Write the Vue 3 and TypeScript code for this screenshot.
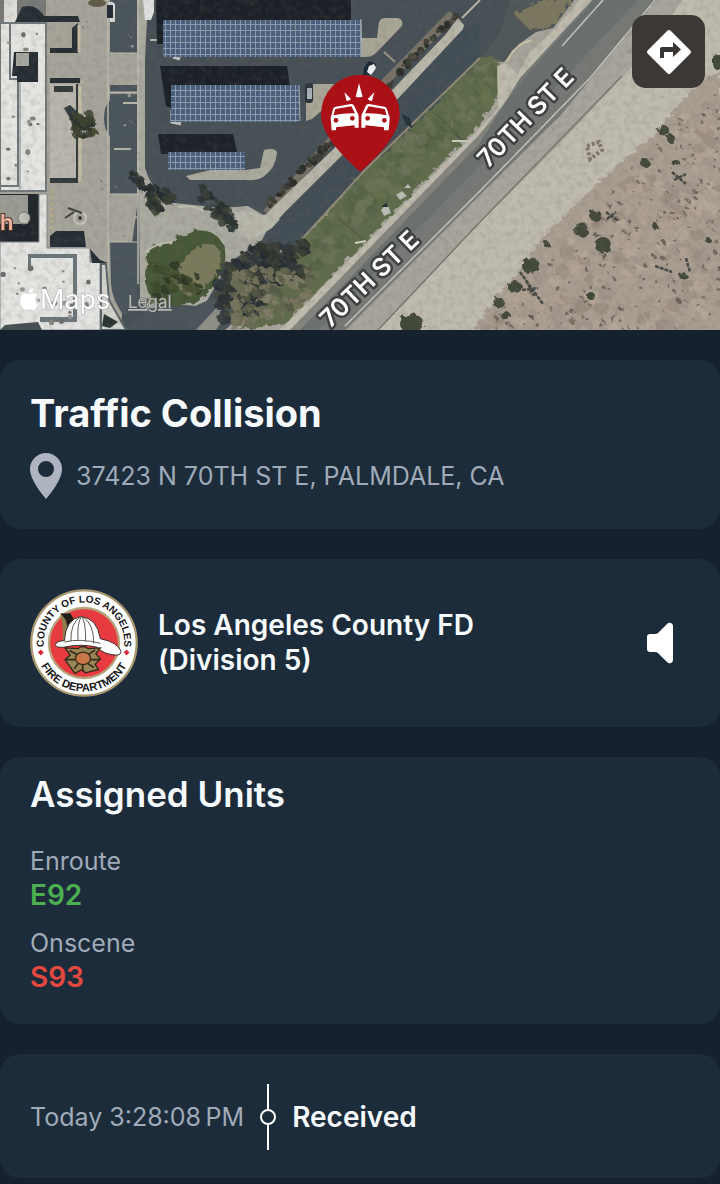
<script setup lang="ts">
interface Unit {
  status: string
  name: string
  tone: 'enroute' | 'onscene'
}

interface Spot {
  x: number
  y: number
  rx: number
  ry: number
  fill: string
}

const units: Unit[] = [
  { status: 'Enroute', name: 'E92', tone: 'enroute' },
  { status: 'Onscene', name: 'S93', tone: 'onscene' },
]

let seed = 4217
function random(): number {
  seed = (seed * 16807) % 2147483647
  return seed / 2147483647
}

function scatter(
  count: number,
  box: [number, number, number, number],
  radius: [number, number],
  fills: string[],
  inside: (x: number, y: number) => boolean = () => true,
): Spot[] {
  const spots: Spot[] = []
  while (spots.length < count) {
    const x = box[0] + random() * (box[2] - box[0])
    const y = box[1] + random() * (box[3] - box[1])
    if (!inside(x, y)) continue
    const r = radius[0] + random() * (radius[1] - radius[0])
    spots.push({ x, y, rx: r, ry: r * (0.6 + random() * 0.5), fill: fills[Math.floor(random() * fills.length)] })
  }
  return spots
}

const inDesert = (x: number, y: number) => y > 326 - (x - 484) * 1.06

const scrub: Spot[] = [
  ...scatter(220, [486, 82, 720, 330], [3, 9], ['#b9ab9b', '#9a8b7e', '#b2a393', '#a0948a'], inDesert),
  ...scatter(200, [486, 82, 720, 330], [0.7, 2.4], ['#574f49', '#64594f', '#4a4742'], inDesert),
]

const bushes: Spot[] = [
  [664, 131, 6, 5], [671, 139, 4, 4], [645, 163, 5, 4], [675, 162, 4, 3], [596, 216, 6, 6],
  [581, 230, 7, 7], [603, 245, 8, 8], [547, 245, 3, 3], [531, 266, 9, 8], [515, 287, 7, 6],
  [499, 303, 6, 5], [505, 315, 5, 4], [591, 296, 4, 4], [718, 62, 6, 8], [412, 324, 12, 10],
  [655, 226, 3, 3], [708, 240, 3, 2], [683, 276, 4, 3],
].map(([x, y, rx, ry]) => ({ x, y, rx, ry, fill: '#434a3a' }))

const trees: Spot[] = [
  ...scatter(90, [218, 236, 264, 318], [2, 7], ['#2b3236', '#353a33', '#434739', '#262d31'], (x, y) => y < 324 - (x - 214) * 0.1 && y > 272 - (x - 216) * 0.7),
  ...scatter(90, [246, 244, 304, 290], [2, 7], ['#242c31', '#30363a', '#2b332f', '#3b4035'], (x, y) => y < 290 - (x - 246) * 0.2),
  ...scatter(130, [234, 268, 312, 328], [2, 6], ['#75745b', '#666a50', '#85806a', '#525744', '#7d7860'], (x, y) => y < 340 - (x - 232) * 0.5),
  ...scatter(40, [148, 188, 172, 212], [2, 5], ['#2c342f', '#384033', '#252c30'], (x, y) => Math.hypot(x - 160, y - 200) < 12),
  ...scatter(50, [202, 186, 236, 230], [2, 5], ['#2e3633', '#3a4036', '#252c30'], (x, y) => Math.abs(y - 196 - (x - 204)) < 9),
  ...scatter(40, [150, 262, 200, 302], [2, 6], ['#3d4a2c', '#2d3625', '#59603e', '#46502f']),
  ...scatter(20, [130, 170, 150, 190], [2, 4], ['#272e31', '#30372f'], (x, y) => Math.abs(y - 172 - (x - 130)) < 5),
  ...scatter(36, [74, 112, 94, 138], [2, 5], ['#39402f', '#2a312a', '#45492f'], (x, y) => Math.hypot(x - 84, y - 125) < 12),
]

const grassTufts = scatter(
  260, [296, 62, 500, 296], [2, 7], ['#4f6040', '#68734f', '#586648', '#767860'],
  (x, y) => y > 544 - x && y < 590 - x,
)

const hedges = scatter(
  110, [266, 14, 456, 210], [1.5, 4], ['#2e2e2a', '#3b3a33', '#4b4a40'],
  (x, y) => Math.abs(y - 204 + (x - 270) * 1.02) < 4,
)

const specks = scatter(
  34, [2, 28, 98, 326], [0.8, 3], ['#85857f', '#9b9891', '#6d6f6c'],
  (x, y) => (x < 44 && y < 188) || (y > 252 && y < 326),
)

const paverMarks = scatter(45, [80, 10, 140, 240], [0.5, 1.8], ['#77766e', '#8a867b', '#c4c1b4'])
</script>

<template>
  <main class="incident">
    <header class="map">
      <svg class="map-art" viewBox="0 0 720 330" role="img" aria-label="Satellite map of 70TH ST E">
        <defs>
          <pattern id="panels" width="5" height="6" patternUnits="userSpaceOnUse">
            <rect width="5" height="6" fill="#4a5f7c" />
            <path d="M0 .5H5M.5 0V6" stroke="#8b9db0" stroke-width="1" />
          </pattern>
          <filter id="grain" x="0" y="0" width="100%" height="100%">
            <feTurbulence type="fractalNoise" baseFrequency=".16" numOctaves="3" seed="8" />
            <feColorMatrix values="0 0 0 0 .16  0 0 0 0 .15  0 0 0 0 .13  1.4 0 0 0 -.58" />
          </filter>
          <filter id="rough" x="-5%" y="-5%" width="110%" height="110%">
            <feTurbulence type="fractalNoise" baseFrequency=".16" numOctaves="2" seed="3" />
            <feDisplacementMap in="SourceGraphic" scale="7" />
          </filter>
          <linearGradient id="asphalt" x1="0" y1="0" x2="1" y2="1">
            <stop offset="0" stop-color="#777a78" />
            <stop offset=".5" stop-color="#85857f" />
            <stop offset="1" stop-color="#999892" />
          </linearGradient>
        </defs>

        <rect width="720" height="330" fill="#a7a59b" />

        <!-- parking lot -->
        <path d="M145 0H536L500 60L270 258L214 330H120L145 150Z" fill="#475056" />
        <path d="M137 0H148L145 60L145 168Q150 185 165 202L222 208L248 206L272 220L262 240L230 262L212 292L190 330H160L140 300Z" fill="#abaaa0" />
        <path d="M120 330L160 302L195 306L218 296L285 250L300 262L225 330Z" fill="#4a545a" />
        <path d="M196 330L218 306L226 314L216 330Z" fill="#8e9088" />

        <!-- service road -->
        <path d="M110 0H137V53H110ZM110 85H137V92H110ZM110 94H137V194H110V136Q104 130 104 118T110 100ZM110 242H137V290L142 304L124 316Q112 300 111 284Z" fill="#4a555c" />
        <path d="M108 0V300M138 0V284" stroke="#bcb9ad" stroke-width="1.5" fill="none" />
        <path d="M114 149H131M123 103H140M150 40H158" stroke="#b5b4a7" stroke-width="2" />
        <path d="M110 53H137M110 194H137M110 242H137M108 92H138" stroke="#c1beb2" stroke-width="1" />

        <!-- buildings -->
        <path d="M0 0H46V22H0Z" fill="#777a76" />
        <path d="M4 0H17V22H4Z" fill="#deddd7" />
        <path d="M22 7Q36 3 44 16H78L80 22H15Z" fill="#262e34" />
        <path d="M0 23H46V191H0Z" fill="#e4e5e1" stroke="#72797c" stroke-width="2" />
        <path d="M10 23V79H18V186H0" fill="none" stroke="#6f777a" stroke-width="2" />
        <path d="M14 52H38V82H17V76H12Z" fill="#252d33" />
        <rect x="16" y="53" width="13" height="13" fill="#a6a79e" />
        <path d="M20 82V189" stroke="#b1b5b2" stroke-width="2" />
        <path d="M50 24H76V52H50Z" fill="#a8a399" />
        <path d="M50 48H72V28L78 23V53H50ZM50 78H80V83H50Z" fill="#262e33" />
        <path d="M50 84H76V181H50Z" fill="#b9b7ad" />
        <path d="M54 86H73V92H54ZM76 84H78V183H50V178H76Z" fill="#333a3b" />
        <path d="M79 25V52M80 86V181" stroke="#c7bfa6" stroke-width="3" />
        <path d="M64 108L70 105L86 120L80 132L72 122Z" fill="#343d40" />
        <path d="M0 194H39V242H0Z" fill="#20262c" />
        <path d="M0 195H28V224H0Z" fill="#9b9c94" />
        <path d="M39 194H47V248H90V262H100V330H0V242H39Z" fill="#e3e4e1" stroke="#81888a" />
        <path d="M50 236L56 231H84L86 247H50ZM90 249L100 260L108 263H92Z" fill="#252e34" />
        <path d="M28 254H77V322H40V317H73V258H31V270H28Z" fill="#6c767a" />
        <path d="M101 264H106L109 300L126 330H101Z" fill="#d4d4ce" stroke="#5d666a" stroke-width="2" />
        <path d="M104 314L118 322L110 328L102 326Z" fill="#2d3635" />
        <path d="M5 325L38 322L42 330H0Z" fill="#444e52" />
        <circle cx="80" cy="218" r="6" fill="none" stroke="#c8c5b9" stroke-width="2" />
        <path d="M68 208L82 213M65 218L74 212" stroke="#3e403d" stroke-width="2" />
        <circle cx="80" cy="218" r="2" fill="#383a38" />
        <circle cx="24" cy="218" r="6" fill="#c0c1b9" stroke="#777a76" />
        <path d="M52 190V230" stroke="#bbae86" stroke-width="3" stroke-dasharray="3 3" />
        <ellipse v-for="(s, i) in specks" :key="`s${i}`" :cx="s.x" :cy="s.y" :rx="s.rx" :ry="s.ry" :fill="s.fill" />
        <ellipse v-for="(s, i) in paverMarks" :key="`p${i}`" :cx="s.x" :cy="s.y" :rx="s.rx" :ry="s.ry" :fill="s.fill" opacity=".6" />
        <ellipse cx="97" cy="3" rx="9" ry="4" fill="#605c47" />
        <path d="M143 0H154V12L151 20H145Z" fill="#e0e2e0" />
        <path d="M108 3Q111 0 115 4V22H110Z" fill="#d9dcda" />
        <path d="M107 5H113V18H107Z" fill="#252e35" />

        <!-- solar canopies and islands -->
        <path d="M156 0H351V20H163V44H157Z" fill="#1b2127" />
        <path d="M160 66H287L290 86H171V108L166 106Z" fill="#1b2127" />
        <path d="M158 134H233L237 152H168V154H161Z" fill="#1c2228" />
        <path d="M361 38H377L379 22Q381 18 385 18H398Q404 20 402 26L376 53Q372 57 365 57H358Z" fill="#aaa697" />
        <path d="M306 121V92Q308 84 316 84H334L326 107L312 119Z" fill="#aaa697" />
        <path d="M186 176L210 170H246L260 168L264 150Q276 147 277 153Q276 168 263 177Q257 181 246 180L190 180Z" fill="#aaa99e" />
        <path d="M172 110V122L181 124M173 57L180 59" stroke="#c4c7c3" stroke-width="3" fill="none" />
        <g fill="url(#panels)">
          <rect x="163" y="20" width="198" height="37" />
          <rect x="171" y="85" width="128" height="37" />
          <rect x="168" y="152" width="77" height="18" />
        </g>
        <path d="M361 19L362 56M299 85L300 121" stroke="#a5afb2" />
        <path d="M384 52L395 62M443 58L453 70" stroke="#97947f" stroke-width="2" />
        <rect x="305" y="83" width="8" height="20" rx="3" fill="#2a343b" />
        <path d="M307 88H312V99H307Z" fill="#aab5ba" />
        <path d="M364 68L369 61L376 64L371 75L363 75Z" fill="#1b2835" />
        <path d="M369 66L374 64L376 68L371 75L367 72Z" fill="#f0f2f3" />

        <!-- hedge, walk and lane -->
        <path d="M449 11L458 18L388 84L270 215L263 211L360 102Z" fill="#777267" />
        <ellipse v-for="(s, i) in hedges" :key="`h${i}`" :cx="s.x" :cy="s.y" :rx="s.rx" :ry="s.ry" :fill="s.fill" />
        <path d="M458 18L464 25L461 37L284 213L270 229L248 238L236 228L266 214L350 133L397 85L446 34Z" fill="#b8b6a8" />
        <path d="M462 18L480 0" stroke="#bcb8a6" stroke-width="2" />
        <path d="M228 215L242 210L280 219L272 228L250 241L240 233Z" fill="#b8b7ac" />
        <path d="M465 27L480 24L480 60L366 169L288 254L265 236L350 150Z" fill="#424d55" />
        <path d="M510 0H574L553 28L536 32L519 44L504 62L480 60L500 32Z" fill="#4f5758" />
        <path d="M514 14L545 0H572L553 27L530 30Z" fill="#7c775f" filter="url(#rough)" />
        <path d="M507 62Q514 44 532 40" fill="none" stroke="#cbc5a8" stroke-width="2" />

        <!-- verge -->
        <path d="M480 58L492 56L500 66L499 92L480 124L285 324L240 330L292 250L366 169L412 128Z" fill="#5f6c4b" filter="url(#rough)" />
        <g filter="url(#rough)">
          <ellipse v-for="(s, i) in grassTufts" :key="`g${i}`" :cx="s.x" :cy="s.y" :rx="s.rx" :ry="s.ry" :fill="s.fill" opacity=".5" />
        </g>
        <path d="M480 58L366 169L290 252" stroke="#918a78" stroke-width="2" fill="none" />
        <path d="M402 114L410 118L412 128L405 124Z" fill="#26323a" />
        <path d="M381 210L387 203L391 213L384 216ZM396 195L402 191L407 196L400 200ZM404 188L408 184L411 188Z" fill="#babbb4" />
        <path d="M381 207L387 202L388 207Z" fill="#22312f" />

        <!-- planting circle -->
        <g filter="url(#rough)">
          <path d="M147 254Q150 244 172 242Q190 226 210 232Q228 240 225 262Q210 306 178 306Q145 308 146 278Z" fill="#475838" />
          <path d="M196 250Q212 236 220 252Q224 270 208 284Q188 304 180 290Q174 258 196 250Z" fill="#7b7a5c" />
        </g>
        <path d="M146 252Q155 243 172 242M178 207Q196 204 204 212" fill="none" stroke="#c2c0b2" stroke-width="2" />
        <g filter="url(#rough)">
          <ellipse v-for="(s, i) in trees" :key="`t${i}`" :cx="s.x" :cy="s.y" :rx="s.rx" :ry="s.ry" :fill="s.fill" opacity=".85" />
        </g>

        <!-- 70th street -->
        <path d="M580 0H720V330H280L480 128L498 108L497 66L506 63L518 74L530 52L552 32Z" fill="#bfbbae" />
        <path d="M594 0L532 69L480 134L290 330H378L480 222L560 143L650 47L682 0Z" fill="url(#asphalt)" />
        <path d="M592 0L520 78L480 143L300 330H318L480 166L540 104L638 0Z" fill="#656b6c" opacity=".8" />
        <path d="M632 0L480 158L314 330H345L480 195L560 116L656 0Z" fill="#6d7170" opacity=".6" />
        <path d="M656 0L560 116L480 195L346 330H378L480 222L560 143L650 47L682 0Z" fill="#a7a59d" />
        <path d="M603 0L562 46" stroke="#c6c7c2" stroke-width="1.5" />
        <path d="M655 0L590 78L480 191L345 326" stroke="#c5c4bb" stroke-width="1.5" fill="none" />
        <path d="M622 76L480 222L378 330" stroke="#77736b" stroke-width="1.2" fill="none" />
        <path d="M652 27L628 52L650 47" stroke="#9b968a" stroke-width="2" fill="none" />
        <path d="M455 135L467 142M436 114L464 141M338 218L366 242" stroke="#4d5246" stroke-width="1" />
        <path d="M452 141H467M355 243L366 241" stroke="#d0cfc4" stroke-width="2" />

        <!-- desert -->
        <path d="M720 72L700 80L683 100L650 138L617 165L590 191L560 220L540 240L518 272L492 302L474 330H720Z" fill="#a99e91" filter="url(#rough)" />
        <path d="M700 120H720V330H500L600 245Z" fill="#a99e91" />
        <g filter="url(#rough)">
          <ellipse v-for="(s, i) in scrub" :key="`d${i}`" :cx="s.x" :cy="s.y" :rx="s.rx" :ry="s.ry" :fill="s.fill" opacity=".65" />
          <ellipse v-for="(s, i) in bushes" :key="`b${i}`" :cx="s.x" :cy="s.y" :rx="s.rx" :ry="s.ry" :fill="s.fill" />
        </g>
        <path d="M587 146L599 142L602 150L590 159Z" fill="none" stroke="#807769" stroke-width="4" stroke-dasharray="3 2" />
        <path d="M672 172L686 184M674 180L686 174M606 212L618 221M607 219L616 212M520 272L543 304M522 290L538 288M526 280L534 296M655 266L672 272M686 258L690 272" stroke="#464744" stroke-width="2.5" stroke-dasharray="4 1" />

        <rect width="720" height="330" filter="url(#grain)" opacity=".32" />

        <!-- labels -->
        <g class="street">
          <text transform="translate(488 169) rotate(-46)">70TH ST E</text>
          <text transform="translate(330 329) rotate(-44)">70TH ST E</text>
        </g>
        <text class="place" x="0" y="230">h</text>
        <g class="credit">
          <svg x="18" y="288" width="22" height="22" viewBox="0 0 24 24">
            <path d="M12.152 6.896c-.948 0-2.415-1.078-3.96-1.04-2.04.027-3.91 1.183-4.961 3.014-2.117 3.675-.546 9.103 1.519 12.09 1.013 1.454 2.208 3.09 3.792 3.039 1.52-.065 2.09-.987 3.935-.987 1.831 0 2.35.987 3.96.948 1.637-.026 2.676-1.48 3.676-2.948 1.156-1.688 1.636-3.325 1.662-3.415-.039-.013-3.182-1.221-3.22-4.857-.026-3.04 2.48-4.494 2.597-4.559-1.429-2.09-3.623-2.324-4.39-2.376-2-.156-3.675 1.09-4.61 1.09zM15.53 3.83c.843-1.012 1.4-2.427 1.245-3.83-1.207.052-2.662.805-3.532 1.818-.78.896-1.454 2.338-1.273 3.714 1.338.104 2.715-.688 3.559-1.701" />
          </svg>
          <text class="brand" x="40" y="309">Maps</text>
          <a href="#legal"><text class="legal" x="128" y="308">Legal</text></a>
        </g>

        <!-- collision pin -->
        <svg x="240" y="0" width="240" height="330" viewBox="0 0 720 990">
          <path d="M361 515Q342 500 302 458Q243 392 243 342A118 118 0 0 1 479 342Q479 392 420 458Q380 500 361 515Z" fill="#ab1016" />
          <g fill="#fff">
            <path d="M357 250L368 290Q358 294 347 290ZM313 277L333 297Q328 303 320 303ZM403 277L383 297Q388 303 396 303Z" />
            <path d="M279 328Q280 321 287 320L332 312Q340 311 343 318L354 342Q356 346 356 352V383H344V376L288 382V391H275L272 354Q272 348 275 344Z" />
            <path d="M441 328Q440 321 433 320L388 312Q380 311 377 318L366 342Q364 346 364 352V383H376V376L432 382V391H446L449 354Q449 348 446 344Z" />
          </g>
          <g fill="#ab1016">
            <path d="M286 327L334 319L345 340Q310 339 280 346ZM434 327L386 319L375 340Q410 339 440 346Z" />
            <circle cx="288" cy="361" r="7" />
            <circle cx="337" cy="355" r="7" />
            <circle cx="383" cy="355" r="7" />
            <circle cx="433" cy="361" r="7" />
          </g>
        </svg>
      </svg>

      <button class="directions" type="button" aria-label="Directions">
        <svg viewBox="0 0 46 46" width="46" height="46">
          <path d="M23 3L43 23L23 43L3 23Z" fill="#fff" stroke="#fff" stroke-width="4" stroke-linejoin="round" />
          <path d="M14 29V20Q14 18 16 18H27V13L35 20.500L27 28V23H18V29Z" fill="#383532" />
        </svg>
      </button>
    </header>

    <section class="card summary">
      <h1>Traffic Collision</h1>
      <p class="address">
        <svg viewBox="0 0 32 46" width="32" height="46" aria-hidden="true">
          <path fill-rule="evenodd" d="M16 46Q0 27 0 16A16 16 0 0 1 32 16Q32 27 16 46ZM16 8A8 8 0 1 0 16 24A8 8 0 1 0 16 8Z" />
        </svg>
        <span>37423 N 70TH ST E, PALMDALE, CA</span>
      </p>
    </section>

    <section class="card agency">
      <svg class="seal" viewBox="27 24 330 330" role="img" aria-label="County of Los Angeles Fire Department seal">
        <defs>
          <path id="arc-top" d="M70 204A123 123 0 1 1 314 204" />
          <path id="arc-bottom" d="M44 189A148 148 0 0 0 340 189" />
        </defs>
        <circle cx="192" cy="189" r="161" fill="#fff" stroke="#a99870" stroke-width="7" />
        <circle cx="192" cy="189" r="107" fill="#e83a41" stroke="#b5a37c" stroke-width="7" />
        <text class="seal-top" text-anchor="middle"><textPath href="#arc-top" startOffset="50%">COUNTY OF LOS ANGELES</textPath></text>
        <text class="seal-bottom" text-anchor="middle"><textPath href="#arc-bottom" startOffset="50%">FIRE DEPARTMENT</textPath></text>
        <path d="M60 209L69 218L60 227L51 218ZM322 209L331 218L322 227L313 218Z" fill="#d52c3a" />
        <path d="M122 108Q116 98 124 97L152 99L158 113L142 160L138 200L126 202Q130 140 122 108Z" fill="#8d7b48" />
        <path d="M122 100L150 98L160 114L142 142L136 118Z" fill="#211d1b" />
        <path d="M104 194Q110 182 132 182Q136 116 182 108Q232 112 242 176Q294 186 305 214Q306 226 288 226Q252 224 232 202Q180 190 130 202Q106 204 104 194Z" fill="#fff" stroke="#332b26" stroke-width="3" />
        <path d="M152 184Q150 128 182 108M174 182Q170 130 184 108M197 184Q198 130 186 108M222 190Q222 130 188 108M132 186Q180 174 242 190" fill="none" stroke="#5d5853" stroke-width="3" />
        <path d="M134 204L174 206Q188 194 204 206L242 204L228 222L242 238L226 254L236 270L196 280L186 270L164 282L134 240L150 226Z" fill="#9a8654" stroke="#302819" stroke-width="4" />
        <path d="M138 240L168 240M210 240L240 240M188 256V276M148 212L170 224M226 210L206 224M162 268L174 252M222 264L204 252" stroke="#302819" stroke-width="5" />
        <ellipse cx="189" cy="236" rx="23" ry="19" fill="#c87848" stroke="#3a2b1c" stroke-width="4" />
      </svg>
      <h2>Los Angeles County FD (Division 5)</h2>
      <button class="speaker" type="button" aria-label="Play audio">
        <svg viewBox="0 0 28 42" width="28" height="42">
          <path d="M4 12H9Q11 12 12 11L21 2Q23 0 25 1Q27 2 27 4V38Q27 40 25 41Q23 42 21 40L12 31Q11 30 9 30H4Q1 30 1 27V15Q1 12 4 12Z" fill="#fff" />
        </svg>
      </button>
    </section>

    <section class="card units">
      <h2>Assigned Units</h2>
      <dl>
        <div v-for="unit in units" :key="unit.name" class="unit">
          <dt>{{ unit.status }}</dt>
          <dd :class="unit.tone">{{ unit.name }}</dd>
        </div>
      </dl>
    </section>

    <section class="card timeline">
      <time>Today 3:28:08&#8239;PM</time>
      <span class="marker" aria-hidden="true"></span>
      <strong>Received</strong>
    </section>
  </main>
</template>

<style>
body {
  margin: 0;
  background: #15212d;
}
</style>

<style scoped>
.incident {
  display: flex;
  flex-direction: column;
  gap: 30px;
  padding-bottom: 6px;
  background: #15212d;
  color: #f6fafd;
  font-family: Inter, "Liberation Sans", sans-serif;
}

h1,
h2,
p,
dl,
dd {
  margin: 0;
}

button {
  display: grid;
  place-items: center;
  padding: 0;
  border: 0;
  background: none;
  cursor: pointer;
}

.map {
  position: relative;
}

.map-art {
  display: block;
  width: 100%;
  height: auto;
}

.street text {
  fill: #fff;
  stroke: #3f4040;
  stroke-width: 5px;
  stroke-linejoin: round;
  paint-order: stroke;
  font-size: 25px;
  font-weight: 600;
}

.place {
  fill: #f0b3a0;
  stroke: #54332c;
  stroke-width: 2px;
  paint-order: stroke;
  font-size: 22px;
  font-weight: 600;
}

.credit {
  fill: #fff;
}

.brand {
  font-size: 27px;
  stroke: #a4a8a8;
  stroke-width: 1px;
  paint-order: stroke;
}

.legal {
  font-size: 17px;
  fill: #b9bcb9;
  stroke: #555b5a;
  stroke-width: 1px;
  paint-order: stroke;
  text-decoration: underline;
}

.directions {
  position: absolute;
  top: 15px;
  right: 15px;
  width: 73px;
  height: 73px;
  border-radius: 14px;
  background: #3b3835;
}

.card {
  padding: 30px;
  border-radius: 20px;
  background: #1c2c3b;
}

.summary h1 {
  font-size: 38px;
  font-weight: 700;
  line-height: 46px;
}

.address {
  display: flex;
  align-items: center;
  gap: 14px;
  margin-top: 17px;
  color: #a0abb9;
  font-size: 25px;
  line-height: 46px;
}

.address svg {
  flex: none;
  fill: #aeb5c1;
}

.agency {
  display: flex;
  align-items: center;
  gap: 20px;
}

.seal {
  flex: none;
  width: 108px;
  height: 108px;
}

.seal text {
  fill: #17171a;
  font-family: "Liberation Sans", Arial, sans-serif;
  font-weight: 700;
}

.seal-top {
  font-size: 31px;
}

.seal-bottom {
  font-size: 34px;
}

.agency h2 {
  flex: 0 1 360px;
  font-size: 28px;
  font-weight: 600;
  line-height: 35px;
}

.speaker {
  width: 60px;
  height: 60px;
  margin-left: auto;
}

.units {
  padding-top: 15px;
}

.units h2 {
  font-size: 35px;
  font-weight: 600;
  line-height: 44px;
}

.units dl {
  display: grid;
  gap: 14px;
  margin-top: 28px;
}

.unit dt {
  color: #a0abb9;
  font-size: 25px;
  line-height: 34px;
}

.unit dd {
  font-size: 28px;
  font-weight: 600;
  line-height: 34px;
}

.enroute {
  color: #4caf50;
}

.onscene {
  color: #e5483f;
}

.timeline {
  display: flex;
  align-items: center;
  padding-bottom: 28px;
}

.timeline time {
  color: #a0abb9;
  font-size: 25px;
}

.marker {
  display: grid;
  place-items: center;
  width: 18px;
  height: 66px;
  margin: 0 15px;
  background: linear-gradient(#fff, #fff) center / 2px 100% no-repeat;
}

.marker::before {
  content: "";
  width: 12px;
  height: 12px;
  border: 2px solid #fff;
  border-radius: 50%;
  background: #1c2c3b;
}

.timeline strong {
  font-size: 28px;
  font-weight: 600;
}
</style>
